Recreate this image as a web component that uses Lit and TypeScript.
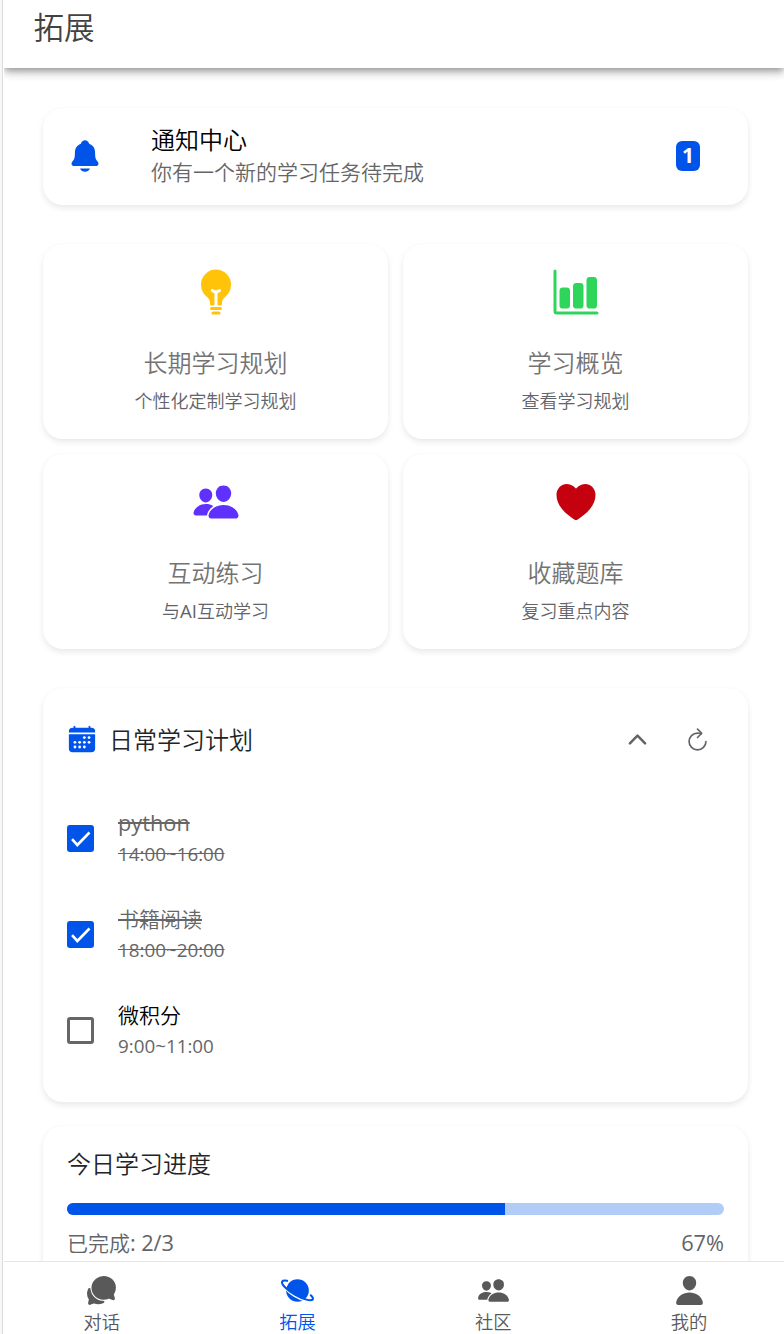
import { LitElement, html, css, svg, nothing } from "lit";
import { customElement, property, state } from "lit/decorators.js";
import { classMap } from "lit/directives/class-map.js";

const ICONS: Record<string, unknown> = {
  bell: svg`<path d="M440.08 341.31c-1.66-2-3.29-4-4.89-5.93-22-26.61-35.31-42.67-35.31-118 0-39-9.33-71-27.72-95-13.56-17.73-31.89-31.18-56.05-41.12a3 3 0 01-.82-.67C306.6 51.49 282.82 32 256 32s-50.59 19.49-59.28 48.56a3.13 3.13 0 01-.81.65c-56.38 23.21-83.78 67.74-83.78 136.14 0 75.36-13.29 91.42-35.31 118-1.6 1.93-3.23 3.89-4.89 5.93a35.16 35.16 0 00-4.65 37.62c6.17 13 19.32 21.07 34.33 21.07H410.5c14.94 0 28-8.06 34.19-21a35.17 35.17 0 00-4.61-37.66zM256 480a80.06 80.06 0 0070.44-42.13 4 4 0 00-3.54-5.87H189.12a4 4 0 00-3.55 5.87A80.06 80.06 0 00256 480z"/>`,
  bulb: svg`<path d="M288 464h-64a16 16 0 000 32h64a16 16 0 000-32zM304 416h-96a16 16 0 000 32h96a16 16 0 000-32zM369.42 62.69C339.35 32.58 299.07 16 256 16A159.62 159.62 0 0096 176c0 46.62 17.87 90.23 49 119.64l4.36 4.09C167.37 316.57 192 339.64 192 360v24a16 16 0 0016 16h24a8 8 0 008-8V274.82a8 8 0 00-5.13-7.47A130.73 130.73 0 01208.71 253a16 16 0 1118.58-26c7.4 5.24 21.65 13 28.71 13s21.31-7.78 28.73-13a16 16 0 0118.56 26 130.73 130.73 0 01-26.16 14.32 8 8 0 00-5.13 7.47V392a8 8 0 008 8h24a16 16 0 0016-16v-24c0-19.88 24.36-42.93 42.15-59.77l4.91-4.66C399.08 265 416 223.61 416 176a159.16 159.16 0 00-46.58-113.31z"/>`,
  chart: svg`<path d="M32 32v432a16 16 0 0016 16h432" fill="none" stroke="currentColor" stroke-width="32" stroke-linecap="round" stroke-linejoin="round"/><rect x="80" y="208" width="112" height="224" rx="36"/><rect x="224" y="160" width="112" height="272" rx="36"/><rect x="368" y="96" width="112" height="336" rx="36"/>`,
  people: svg`<path d="M336 256c-20.56 0-40.44-9.18-56-25.84-15.13-16.25-24.37-37.92-26-61-1.74-24.62 5.77-47.26 21.14-63.76S312 80 336 80c23.83 0 45.38 9.06 60.7 25.52 15.47 16.62 23 39.22 21.26 63.63-1.67 23.11-10.9 44.77-26 61C376.44 246.82 356.57 256 336 256zM467.83 432H204.18a27.71 27.71 0 01-22-10.67 30.22 30.22 0 01-5.26-25.79c8.42-33.81 29.28-61.85 60.32-81.08C264.79 297.4 299.86 288 336 288c36.85 0 71 9 98.71 26.05 31.11 19.13 52 47.33 60.38 81.55a30.27 30.27 0 01-5.32 25.78A27.68 27.68 0 01467.83 432zM147 260c-35.19 0-66.13-32.72-69-72.93-1.42-20.6 5-39.65 18-53.62 12.86-13.83 31-21.45 51-21.45s38 7.66 50.93 21.57c13.1 14.08 19.5 33.09 18 53.52-2.87 40.2-33.8 72.91-68.93 72.91zM212.66 291.45c-17.59-8.6-40.42-12.9-65.65-12.9-29.46 0-58.07 7.68-80.57 21.62-25.51 15.83-42.67 38.88-49.6 66.71a27.39 27.39 0 004.79 23.36A25.32 25.32 0 0041.72 400h111a8 8 0 007.87-6.57c.11-.63.25-1.26.41-1.88 8.48-34.06 28.35-62.84 57.71-83.82a8 8 0 00-.63-13.39c-1.57-.92-3.37-1.89-5.42-2.89z"/>`,
  heart: svg`<path d="M256 448a32 32 0 01-18-5.57c-78.59-53.35-112.62-89.93-131.39-112.8-40-48.75-59.15-98.8-58.61-153C48.63 114.52 98.46 64 159.08 64c44.08 0 74.61 24.83 92.39 45.51a6 6 0 009.06 0C278.31 88.81 308.84 64 352.92 64c60.62 0 110.45 50.52 111.08 112.64.54 54.21-18.63 104.26-58.61 153-18.77 22.87-52.8 59.45-131.39 112.8A32 32 0 01256 448z"/>`,
  calendar: svg`<path d="M480 128a64 64 0 00-64-64h-16V48.45c0-8.61-6.62-16-15.23-16.43A16 16 0 00368 48v16H144V48.45c0-8.61-6.62-16-15.23-16.43A16 16 0 00112 48v16H96a64 64 0 00-64 64v12a4 4 0 004 4h440a4 4 0 004-4zM32 416a64 64 0 0064 64h320a64 64 0 0064-64V179a3 3 0 00-3-3H35a3 3 0 00-3 3z"/><g fill="#fff">${[[296, 232], [376, 232], [136, 312], [216, 312], [296, 312], [376, 312], [136, 392], [216, 392], [296, 392]].map(([x, y]) => svg`<circle cx=${x} cy=${y} r="24"/>`)}</g>`,
  up: svg`<path d="M112 328l144-144 144 144" fill="none" stroke="currentColor" stroke-width="48" stroke-linecap="round" stroke-linejoin="round"/>`,
  refresh: svg`<path d="M320 146s24.36-12-64-12a160 160 0 10160 160" fill="none" stroke="currentColor" stroke-width="32" stroke-linecap="round" stroke-miterlimit="10"/><path d="M256 58l80 80-80 80" fill="none" stroke="currentColor" stroke-width="32" stroke-linecap="round" stroke-linejoin="round"/>`,
  chat: svg`<path d="M439.9 405.6a26.77 26.77 0 01-9.59-2l-56.78-20.13-.42-.17a9.88 9.88 0 00-3.91-.76 10.32 10.32 0 00-3.62.66c-1.38.52-13.81 5.19-26.85 8.77-7.07 1.94-31.68 8.27-51.43 8.27-50.48 0-97.68-19.4-132.89-54.63A183.38 183.38 0 01100.3 215.1a175.9 175.9 0 014.06-37.58c8.79-40.62 32.07-77.57 65.55-104A194.76 194.76 0 01290.3 30.4c52.21 0 100.86 20 137 56.18 34.16 34.27 52.88 79.33 52.73 126.87a177.86 177.86 0 01-30.3 99.15l-.19.28-.74 1c-.17.23-.34.45-.5.68l-.15.27a21.63 21.63 0 00-1.08 2.09l15.74 55.94a26.42 26.42 0 011.12 7.11 24 24 0 01-24.03 25.63zM299.87 425.39a15.74 15.74 0 00-10.29-8.1c-5.78-1.53-12.52-1.27-17.67-1.65a201.78 201.78 0 01-128.82-58.75A199.21 199.21 0 0186.4 244.16C85 234.42 85 232 85 232a16 16 0 00-28-10.58s-7.88 8.58-11.6 17.19a162.09 162.09 0 0011 150.06C59 393 59 395 58.42 399.5c-2.73 14.11-7.51 39-10 51.91a24 24 0 008 22.92l.46.39A24.34 24.34 0 0072 480a23.42 23.42 0 009-1.79l53.51-20.65a8.05 8.05 0 015.72 0c21.07 7.84 43 12 63.78 12a176 176 0 0074.91-16.66c5.46-2.56 14-5.34 19-11.12a15 15 0 001.95-16.39z"/>`,
  planet: svg`<circle cx="256" cy="256" r="176"/><path d="M50 204C90 254 140 298 206 338C270 375 330 402 390 418" fill="none" stroke="#fff" stroke-width="34"/><path d="M96 106C58 98 28 100 18 116C-2 150 80 242 214 318C350 396 466 426 492 396C502 380 490 356 462 330" fill="none" stroke="currentColor" stroke-width="32" stroke-linecap="round"/><path d="M73 168L92 132L112 156L84 196Z" fill="#fff"/>`,
  person: svg`<path d="M332.64 64.58C313.18 43.57 286 32 256 32c-30.16 0-57.43 11.5-76.8 32.38-19.58 21.11-29.12 49.8-26.88 80.78C156.76 206.28 203.27 256 256 256s99.16-49.71 103.67-110.82c2.27-30.7-7.33-59.33-27.03-80.6zM432 480H80a31 31 0 01-24.2-11.13c-6.5-7.77-9.12-18.38-7.18-29.11C57.06 392.94 83.4 353.61 124.8 326c36.78-24.51 83.37-38 131.2-38s94.42 13.5 131.2 38c41.4 27.6 67.74 66.93 76.18 113.75 1.94 10.73-.68 21.34-7.18 29.11A31 31 0 01432 480z"/>`,
};

@customElement("app-icon")
class AppIcon extends LitElement {
  @property() name = "";
  static styles = css`
    :host { display: block; flex: none; width: 1em; height: 1em; }
    svg { display: block; width: 100%; height: 100%; fill: currentColor; overflow: visible; }
  `;
  render() {
    return html`<svg viewBox="0 0 512 512" aria-hidden="true">${ICONS[this.name]}</svg>`;
  }
}

interface Task { name: string; time: string; done: boolean; }

// Latin runs keep the regular weight beside the lighter Chinese glyphs.
const mixed = (text: string) =>
  text.split(/([\x21-\x7e]+)/).map((s) => (/^[\x21-\x7e]/.test(s) ? html`<span class="latin">${s}</span>` : s));

@customElement("app-root")
class AppRoot extends LitElement {
  @state() private tasks: Task[] = [
    { name: "python", time: "14:00~16:00", done: true },
    { name: "书籍阅读", time: "18:00~20:00", done: true },
    { name: "微积分", time: "9:00~11:00", done: false },
  ];
  @state() private tab = "拓展";

  private features = [
    { icon: "bulb", tone: "yellow", title: "长期学习规划", note: "个性化定制学习规划" },
    { icon: "chart", tone: "green", title: "学习概览", note: "查看学习规划" },
    { icon: "people", tone: "violet", title: "互动练习", note: "与AI互动学习" },
    { icon: "heart", tone: "red", title: "收藏题库", note: "复习重点内容" },
  ];
  private tabs = [
    { icon: "chat", label: "对话" },
    { icon: "planet", label: "拓展" },
    { icon: "people", label: "社区" },
    { icon: "person", label: "我的" },
  ];

  static styles = css`
    :host {
      display: flex; flex-direction: column; box-sizing: border-box;
      height: 1334px; padding-left: 1px; overflow: hidden;
      background: #fff; border-left: 2px solid #f7f7f7; box-shadow: inset 1px 0 #dcdcdc;
      font-family: "Open Sans", "Noto Sans CJK SC", sans-serif; font-weight: 350; color: #222428;
    }
    * { box-sizing: border-box; }
    .latin { font-weight: 400; font-size: 1.036em; line-height: 1; }
    header {
      flex: none; height: 68px; margin-left: 1px; padding: 6px 29.5px 0; position: relative;
      font-size: 30.5px; line-height: 43px; color: #424242; background: #fff;
      box-shadow: 0 3px 6px -1px rgba(0,0,0,.25), 0 6px 8px rgba(0,0,0,.14), 0 1px 12px rgba(0,0,0,.12);
      clip-path: inset(0 0 -24px 0);
    }
    main { flex: 1; min-height: 0; overflow: hidden; padding: 40px 36px 0 40px; }
    .card {
      background: #fff; border-radius: 20px;
      box-shadow: 0 3px 6px rgba(0,0,0,.09), 0 0 3px rgba(0,0,0,.015);
    }
    .notice { display: flex; align-items: center; height: 97px; padding: 0 48px 2px 24px; }
    .notice app-icon { font-size: 36px; color: #0054e9; margin-right: 48px; }
    .notice .body { flex: 1; padding-bottom: 1px; }
    .notice .title { font-size: 24px; line-height: 33px; color: #000; }
    .notice .note { font-size: 21px; line-height: 32px; color: #666; }
    .badge {
      width: 24px; height: 30px; border-radius: 6px; background: #0054e9; color: #fff;
      font-size: 21px; font-weight: 700; line-height: 29px; text-align: center;
    }
    .grid { display: grid; grid-template-columns: 1fr 1fr; gap: 15px; margin: 39px 0; }
    .feature { height: 195px; padding-top: 24px; display: flex; flex-direction: column; align-items: center; }
    .feature app-icon { font-size: 48px; }
    .feature .title { margin-top: 29px; font-size: 24px; line-height: 36px; color: #737373; }
    .feature .note { margin-top: 7px; font-size: 18px; line-height: 27px; color: #636469; }
    .yellow { color: #ffc409; } .green { color: #2dd55b; } .violet { color: #6030ff; } .red { color: #c5000f; }
    .plan { height: 414px; padding: 21px 24px 0; }
    .plan-head { display: flex; align-items: center; height: 60px; font-size: 24px; padding-right: 16px; }
    .plan-head .cal { font-size: 30px; color: #0054e9; margin-right: 12px; }
    .plan-head .label { flex: 1; padding-bottom: 2px; }
    .plan-head .up { font-size: 27px; color: #636469; margin-right: 33px; }
    .plan-head .ref { font-size: 27px; color: #636469; margin-right: -3px; }
    .tasks { margin-top: 21px; }
    .task { display: flex; align-items: center; height: 96px; }
    .box {
      flex: none; width: 27px; height: 27px; margin-right: 24px;
      border: 3px solid #666; border-radius: 3px;
    }
    .box.on { border-color: #0054e9; background: #0054e9; }
    .box svg { display: block; width: 21px; height: 21px; overflow: visible; }
    .task .name { height: 32px; font-size: 21px; line-height: 32px; color: #000; }
    .task .time { height: 31px; font-size: 18.15px; line-height: 31px; color: #666; }
    .task.done .name { color: #666; }
    .task.done .run { text-decoration: line-through; }
    .progress { margin-top: 24px; height: 200px; padding: 20px 24px; }
    .progress .title { font-size: 24px; line-height: 36px; }
    .bar { height: 12px; margin-top: 21px; border-radius: 6px; background: #b2ccf8; overflow: hidden; }
    .fill { height: 100%; background: #0054e9; }
    .stats { display: flex; justify-content: space-between; height: 32px; margin-top: 12px; font-size: 21px; line-height: 32px; color: #636469; }
    nav {
      flex: none; display: grid; grid-template-columns: repeat(4, 1fr); height: 73px;
      width: 783px; margin-left: 1px;
      border-top: 1px solid #e6e6e6; background: #fff;
    }
    .tab { display: flex; flex-direction: column; align-items: center; padding-top: 12px; color: #595959; }
    .tab.active { color: #0054e9; }
    .tab app-icon { font-size: 33px; }
    .tab span { font-size: 18.3px; line-height: 27px; margin-top: 1px; }
  `;

  private toggle(i: number) {
    this.tasks = this.tasks.map((t, n) => (n === i ? { ...t, done: !t.done } : t));
  }

  render() {
    const done = this.tasks.filter((t) => t.done).length;
    const pct = Math.round((done / this.tasks.length) * 100);
    return html`
      <header>拓展</header>
      <main>
        <section class="card notice">
          <app-icon name="bell"></app-icon>
          <div class="body"><div class="title">通知中心</div><div class="note">你有一个新的学习任务待完成</div></div>
          <div class="badge">1</div>
        </section>
        <section class="grid">
          ${this.features.map((f) => html`
            <div class="card feature">
              <app-icon class=${f.tone} name=${f.icon}></app-icon>
              <div class="title">${f.title}</div><div class="note">${mixed(f.note)}</div>
            </div>`)}
        </section>
        <section class="card plan">
          <div class="plan-head">
            <app-icon class="cal" name="calendar"></app-icon>
            <div class="label">日常学习计划</div>
            <app-icon class="up" name="up"></app-icon>
            <app-icon class="ref" name="refresh"></app-icon>
          </div>
          <div class="tasks">
            ${this.tasks.map((t, i) => html`
              <div class=${classMap({ task: true, done: t.done })} @click=${() => this.toggle(i)}>
                <div class=${classMap({ box: true, on: t.done })}>
                  ${t.done ? html`<svg viewBox="0 0 21 21"><path d="M2 11.2L7.3 17 19.5 4.5" fill="none" stroke="#fff" stroke-width="2.6"/></svg>` : nothing}
                </div>
                <div>
                  <div class="name"><span class="run">${mixed(t.name)}</span></div>
                  <div class="time"><span class="run">${mixed(t.time)}</span></div>
                </div>
              </div>`)}
          </div>
        </section>
        <section class="card progress">
          <div class="title">今日学习进度</div>
          <div class="bar"><div class="fill" style="width:${(done / this.tasks.length) * 100}%"></div></div>
          <div class="stats"><span>${mixed(`已完成: ${done}/${this.tasks.length}`)}</span><span>${mixed(`${pct}%`)}</span></div>
        </section>
      </main>
      <nav>
        ${this.tabs.map((t) => html`
          <div class=${classMap({ tab: true, active: t.label === this.tab })} @click=${() => (this.tab = t.label)}>
            <app-icon name=${t.icon}></app-icon><span>${t.label}</span>
          </div>`)}
      </nav>`;
  }
}
